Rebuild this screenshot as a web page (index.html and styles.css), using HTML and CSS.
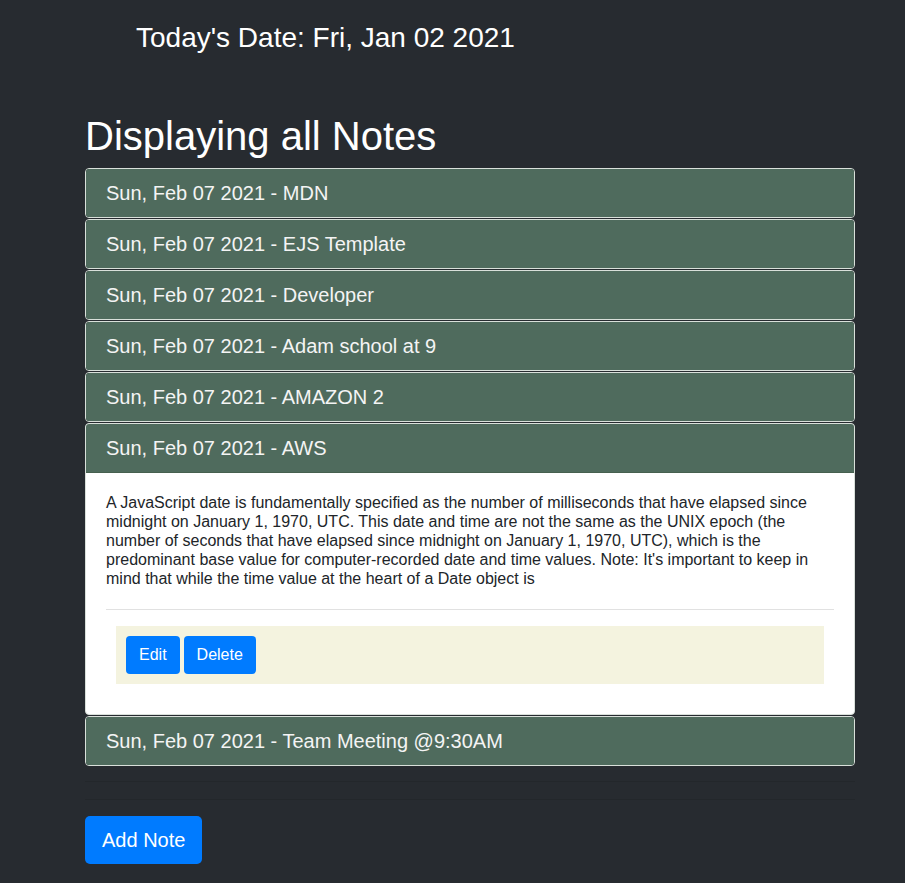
FILE: index.html
```html
<!DOCTYPE html>
<html>
<head>
<meta charset="utf-8">
<link rel="stylesheet" href="styles.css">
</head>
<body>
<div class="page">
  <h3 class="today">Today's Date: Fri, Jan 02 2021</h3>
  <h1 class="title">Displaying all Notes</h1>
  <div class="accordion">
    <div class="card"><div class="card-header">Sun, Feb 07 2021 - MDN</div></div>
    <div class="card"><div class="card-header">Sun, Feb 07 2021 - EJS Template</div></div>
    <div class="card"><div class="card-header">Sun, Feb 07 2021 - Developer</div></div>
    <div class="card"><div class="card-header">Sun, Feb 07 2021 - Adam school at 9</div></div>
    <div class="card"><div class="card-header">Sun, Feb 07 2021 - AMAZON 2</div></div>
    <div class="card open">
      <div class="card-header">Sun, Feb 07 2021 - AWS</div>
      <div class="card-body">
        <p class="note">A JavaScript date is fundamentally specified as the number of milliseconds that have elapsed since midnight on January 1, 1970, UTC. This date and time are not the same as the UNIX epoch (the number of seconds that have elapsed since midnight on January 1, 1970, UTC), which is the predominant base value for computer-recorded date and time values. Note: It's important to keep in mind that while the time value at the heart of a Date object is</p>
        <hr class="sep">
        <div class="actions">
          <button class="btn">Edit</button>
          <button class="btn">Delete</button>
        </div>
      </div>
    </div>
    <div class="card"><div class="card-header">Sun, Feb 07 2021 - Team Meeting @9:30AM</div></div>
  </div>
  <hr class="line1">
  <hr class="line2">
  <button class="btn btn-lg">Add Note</button>
</div>
</body>
</html>
```
FILE: styles.css
```css
html, body {
  margin: 0;
  padding: 0;
  background: #272b30;
  font-family: "Liberation Sans", Arial, sans-serif;
  color: #fff;
}
.page {
  width: 770px;
  margin-left: 85px;
  padding-top: 21px;
  padding-bottom: 20px;
}
.today {
  margin: 0 0 0 51px;
  font-size: 28px;
  font-weight: 400;
  line-height: 34px;
}
.title {
  margin: 57px 0 8px 0;
  font-size: 40px;
  font-weight: 400;
  line-height: 48px;
}
.accordion {
  display: flex;
  flex-direction: column;
  gap: 1px;
}
.card {
  border: 1px solid #d9e0da;
  border-radius: 4px;
  overflow: hidden;
  background: #fff;
}
.card-header {
  background: #4f6b5d;
  color: #f4f4f4;
  font-size: 20px;
  line-height: 24px;
  padding: 12px 20px;
}
.open .card-header {
  border-bottom: 1px solid #46604f;
}
.card-body {
  padding: 20px 20px 30px;
  color: #212529;
}
.note {
  margin: 0;
  font-size: 16px;
  line-height: 19px;
}
.sep {
  margin: 21px 0 16px;
  border: 0;
  border-top: 1px solid #e1e1e1;
}
.actions {
  background: #f4f3df;
  margin: 0 10px;
  padding: 10px 10px;
  display: flex;
  gap: 4px;
}
.btn {
  background: #007bff;
  color: #fff;
  border: 0;
  border-radius: 4px;
  font-family: "Liberation Sans", Arial, sans-serif;
  font-size: 16px;
  line-height: 24px;
  padding: 7px 13px;
}
.line1 {
  margin: 15px 0 0;
  border: 0;
  border-top: 1px solid #23272b;
}
.line2 {
  margin: 17px 0 16px;
  border: 0;
  border-top: 1px solid #23272b;
}
.btn-lg {
  font-size: 20px;
  line-height: 30px;
  padding: 9px 17px;
  border-radius: 5px;
}
```
